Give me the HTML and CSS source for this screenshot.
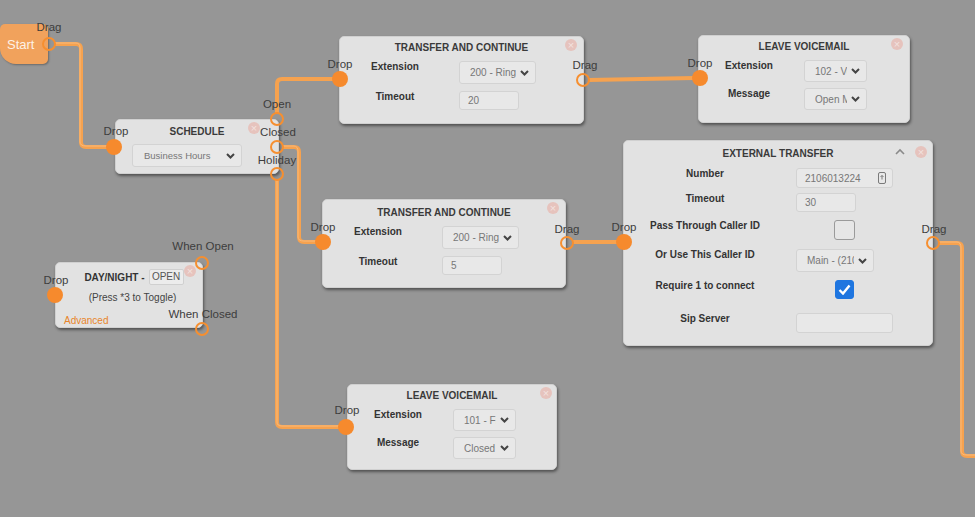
FILE: index.html
```html
<!DOCTYPE html>
<html lang="en">
<head>
    <meta charset="UTF-8">
    <meta name="viewport" content="width=device-width, initial-scale=1.0">
    <title>Call Flow</title>
    <link rel="stylesheet" href="styles.css">
</head>
<body>

<div class="canvas">

    <!-- Connections between nodes -->
    <svg class="wires" width="975" height="517">
        <g fill="none" stroke="#f6a24f" stroke-width="4">
            <path d="M55 44 H76 Q81 44 81 49 V142 Q81 147 86 147 H108"/>
            <path d="M277 113 V84 Q277 79 282 79 H334"/>
            <path d="M283 147 H294 Q299 147 299 152 V237 Q299 242 304 242 H317"/>
            <path d="M277 180 V422 Q277 427 282 427 H340"/>
            <path d="M589 80 L694 78"/>
            <path d="M573 242 H618"/>
            <path d="M939 243 H957 Q962 243 962 248 V451 Q962 456 967 456 H975"/>
        </g>
        <g fill="none" stroke="#f9c590" stroke-width="1" opacity="0.7">
            <path d="M55 43 H76 Q80 43 80 48 V142 Q80 146 86 146 H108"/>
            <path d="M283 146 H294 Q298 146 298 152 V237 Q298 241 304 241 H317"/>
            <path d="M277 180 V422 Q277 426 282 426 H340"/>
            <path d="M939 242 H957 Q961 242 961 248 V451 Q961 455 967 455 H975"/>
        </g>
    </svg>

    <!-- Start -->
    <div class="node-start">Start</div>

    <!-- Schedule -->
    <div class="node n-schedule">
        <span class="close"></span>
        <div class="node-title">SCHEDULE</div>
        <div class="select sel-schedule"><span class="value">Business Hours</span><svg class="chev" width="9" height="6"><path d="M1 1l3.5 3.5L8 1"/></svg></div>
    </div>

    <!-- Transfer and continue (open) -->
    <div class="node n-tc1">
        <span class="close"></span>
        <div class="node-title">TRANSFER AND CONTINUE</div>
        <div class="fields fields-tc">
            <label>Extension</label>
            <div class="select"><span class="value">200 - Ring Group</span><svg class="chev" width="9" height="6"><path d="M1 1l3.5 3.5L8 1"/></svg></div>
            <label>Timeout</label>
            <div class="input input-short">20</div>
        </div>
    </div>

    <!-- Leave voicemail (open) -->
    <div class="node n-lv1">
        <span class="close"></span>
        <div class="node-title">LEAVE VOICEMAIL</div>
        <div class="fields fields-lv">
            <label>Extension</label>
            <div class="select"><span class="value">102 - Voicemail</span><svg class="chev" width="9" height="6"><path d="M1 1l3.5 3.5L8 1"/></svg></div>
            <label>Message</label>
            <div class="select"><span class="value">Open Message</span><svg class="chev" width="9" height="6"><path d="M1 1l3.5 3.5L8 1"/></svg></div>
        </div>
    </div>

    <!-- Transfer and continue (closed) -->
    <div class="node n-tc2">
        <span class="close"></span>
        <div class="node-title">TRANSFER AND CONTINUE</div>
        <div class="fields fields-tc">
            <label>Extension</label>
            <div class="select"><span class="value">200 - Ring Group</span><svg class="chev" width="9" height="6"><path d="M1 1l3.5 3.5L8 1"/></svg></div>
            <label>Timeout</label>
            <div class="input input-short">5</div>
        </div>
    </div>

    <!-- External transfer -->
    <div class="node n-ext">
        <svg class="collapse" width="10" height="7"><path d="M1 6l4-4 4 4"/></svg>
        <span class="close"></span>
        <div class="node-title">EXTERNAL TRANSFER</div>
        <div class="fields fields-ext">
            <label>Number</label>
            <div class="input input-long">2106013224
                <svg class="spin" width="8" height="12"><rect x="0.5" y="0.5" width="7" height="11" rx="1.5"/><path d="M2.5 5l1.5-1.5L5.5 5M4 3.5v4"/></svg>
            </div>
            <label>Timeout</label>
            <div class="input input-short">30</div>
            <label>Pass Through Caller ID</label>
            <div class="check"></div>
            <label>Or Use This Caller ID</label>
            <div class="select sel-caller"><span class="value">Main - (210) 601-3224</span><svg class="chev" width="9" height="6"><path d="M1 1l3.5 3.5L8 1"/></svg></div>
            <label>Require 1 to connect</label>
            <div class="check checked"><svg width="13" height="11"><path d="M1.5 6l3.5 3.5L11.5 1.5"/></svg></div>
            <label>Sip Server</label>
            <div class="input input-long"></div>
        </div>
    </div>

    <!-- Day / night -->
    <div class="node n-daynight">
        <span class="close"></span>
        <div class="dn-title">DAY/NIGHT - <span class="dn-state">OPEN</span></div>
        <div class="dn-hint">(Press *3 to Toggle)</div>
        <div class="dn-advanced">Advanced</div>
    </div>

    <!-- Leave voicemail (holiday) -->
    <div class="node n-lv2">
        <span class="close"></span>
        <div class="node-title">LEAVE VOICEMAIL</div>
        <div class="fields fields-lv">
            <label>Extension</label>
            <div class="select"><span class="value">101 - Front Desk</span><svg class="chev" width="9" height="6"><path d="M1 1l3.5 3.5L8 1"/></svg></div>
            <label>Message</label>
            <div class="select"><span class="value">Closed Message</span><svg class="chev" width="9" height="6"><path d="M1 1l3.5 3.5L8 1"/></svg></div>
        </div>
    </div>

    <!-- Ports and their labels -->
    <svg class="ports" width="975" height="517">
        <g class="drop">
            <circle cx="114" cy="147" r="8"/>
            <circle cx="340" cy="79" r="8"/>
            <circle cx="700" cy="78" r="8"/>
            <circle cx="323" cy="242" r="8"/>
            <circle cx="624" cy="242" r="8"/>
            <circle cx="55" cy="295" r="8"/>
            <circle cx="346" cy="427" r="8"/>
        </g>
        <g class="drag">
            <circle cx="49" cy="44" r="6"/>
            <circle cx="277" cy="119" r="6"/>
            <circle cx="277" cy="147" r="6"/>
            <circle cx="277" cy="174" r="6"/>
            <circle cx="583" cy="80" r="6"/>
            <circle cx="567" cy="243" r="6"/>
            <circle cx="933" cy="243" r="6"/>
            <circle cx="202" cy="263" r="6"/>
            <circle cx="202" cy="329" r="6"/>
        </g>
        <g class="port-label">
            <text x="49" y="31">Drag</text>
            <text x="116" y="135">Drop</text>
            <text x="277" y="108">Open</text>
            <text x="278" y="136">Closed</text>
            <text x="277" y="164">Holiday</text>
            <text x="340" y="68">Drop</text>
            <text x="585" y="69">Drag</text>
            <text x="700" y="67">Drop</text>
            <text x="323" y="231">Drop</text>
            <text x="567" y="233">Drag</text>
            <text x="624" y="231">Drop</text>
            <text x="934" y="233">Drag</text>
            <text x="56" y="284">Drop</text>
            <text x="203" y="250">When Open</text>
            <text x="203" y="318">When Closed</text>
            <text x="347" y="414">Drop</text>
        </g>
    </svg>

</div>

</body>
</html>
```

FILE: styles.css
```css
body {
    margin: 0;
    background-color: #969696;
    font-family: "Liberation Sans", Arial, sans-serif;
    color: #333;
}

.canvas {
    position: relative;
    width: 975px;
    height: 517px;
    overflow: hidden;
}

.wires,
.ports {
    position: absolute;
    left: 0;
    top: 0;
    pointer-events: none;
}
.ports {
    z-index: 2;
}
.drop circle {
    fill: #f68a2d;
}
.drag circle {
    fill: none;
    stroke: #f68f30;
    stroke-width: 2;
}
.port-label text {
    font-family: "Liberation Sans", Arial, sans-serif;
    font-size: 11.5px;
    fill: #3d3d3d;
    text-anchor: middle;
}

/* nodes */
.node {
    position: absolute;
    box-sizing: border-box;
    background-color: #e2e2e2;
    border: 1px solid #d0d0d0;
    border-radius: 5px;
    box-shadow: 1px 2px 3px rgba(0, 0, 0, 0.45);
    z-index: 1;
}
.node-start {
    position: absolute;
    left: 0;
    top: 24px;
    width: 48px;
    height: 40px;
    box-sizing: border-box;
    padding: 14px 0 0 7px;
    background-color: #f1a25c;
    border-radius: 5px 5px 5px 16px;
    box-shadow: 1px 1px 2px rgba(0, 0, 0, 0.3);
    color: #fdf1e6;
    font-size: 13px;
    line-height: 14px;
    z-index: 1;
}

.n-schedule { left: 115px; top: 119px; width: 164px; height: 55px; }
.n-tc1      { left: 339px; top: 36px;  width: 245px; height: 88px; }
.n-lv1      { left: 698px; top: 35px;  width: 212px; height: 88px; }
.n-tc2      { left: 322px; top: 199px; width: 244px; height: 89px; }
.n-ext      { left: 623px; top: 140px; width: 310px; height: 206px; }
.n-daynight { left: 55px;  top: 262px; width: 148px; height: 66px; }
.n-lv2      { left: 347px; top: 384px; width: 210px; height: 86px; }

.close {
    position: absolute;
    top: 2px;
    right: 6px;
    width: 12px;
    height: 12px;
    border-radius: 50%;
    background-color: #e6c3bd;
}
.close::before {
    content: "\00d7";
    display: block;
    text-align: center;
    font-size: 11px;
    line-height: 12px;
    color: #f2e2df;
}
.n-schedule .close { right: 18px; top: 2px; }
.n-ext .close { top: 5px; right: 5px; }
.n-lv2 .close { right: 4px; }

.collapse {
    position: absolute;
    top: 7px;
    right: 27px;
}
.collapse path {
    fill: none;
    stroke: #8a8a8a;
    stroke-width: 1.6;
}

.node-title {
    padding-top: 5px;
    text-align: center;
    font-weight: bold;
    font-size: 10px;
    line-height: 12px;
    color: #3a3a3a;
}
.n-schedule .node-title { padding-top: 6px; }
.n-ext .node-title { padding-top: 7px; }
.n-tc2 .node-title { padding-top: 7px; }

/* label / control grids */
.fields {
    display: grid;
    align-items: start;
    margin-top: 7px;
}
.fields label {
    text-align: center;
    font-weight: bold;
    font-size: 10px;
    line-height: 12px;
    color: #333;
}
.fields-tc {
    grid-template-columns: 110px 77px;
    column-gap: 9px;
    row-gap: 7px;
}
.fields-lv {
    grid-template-columns: 100px 63px;
    column-gap: 5px;
    row-gap: 6px;
}
.fields-lv .select {
    height: 22px;
}
.fields-ext {
    grid-template-columns: 162px 97px;
    grid-template-rows: 25px 27px 29px 31px 33px 20px;
    column-gap: 10px;
    margin-top: 8px;
}

/* form controls */
.select,
.input {
    box-sizing: border-box;
    display: flex;
    align-items: center;
    background-color: #e8e8e8;
    border: 1px solid #d3d3d3;
    border-radius: 3px;
    color: #777;
    font-size: 10px;
}
.select {
    height: 23px;
    padding: 0 6px 0 10px;
    gap: 4px;
}
.select .value {
    flex: 1;
    overflow: hidden;
    white-space: nowrap;
}
.chev {
    flex: none;
}
.chev path {
    fill: none;
    stroke: #444;
    stroke-width: 2;
}
.sel-schedule {
    width: 110px;
    margin: 6px 0 0 16px;
    font-size: 9.5px;
    padding-left: 11px;
}
.sel-caller {
    width: 78px;
}
.input {
    height: 19px;
    padding: 0 6px 0 8px;
}
.input-short {
    width: 60px;
}
.input-long {
    width: 97px;
    height: 20px;
    justify-content: space-between;
}
.spin rect,
.spin path {
    fill: none;
    stroke: #7a7a7a;
    stroke-width: 1;
}

.check {
    justify-self: center;
    box-sizing: border-box;
    width: 21px;
    height: 20px;
    background-color: #e6e6e6;
    border: 1px solid #9a9a9a;
    border-radius: 3px;
}
.check.checked {
    width: 19px;
    height: 19px;
    display: flex;
    align-items: center;
    justify-content: center;
    background-color: #1f76e0;
    border-color: #1f76e0;
}
.check.checked path {
    fill: none;
    stroke: #fff;
    stroke-width: 2.4;
}

/* day / night toggle */
.dn-title {
    display: flex;
    align-items: center;
    justify-content: center;
    gap: 4px;
    margin-top: 6px;
    padding-left: 10px;
    height: 16px;
    font-weight: bold;
    font-size: 10px;
    color: #333;
}
.dn-state {
    box-sizing: border-box;
    width: 35px;
    height: 16px;
    line-height: 14px;
    text-align: center;
    font-weight: normal;
    color: #555;
    background-color: #ececec;
    border: 1px solid #d0d0d0;
    border-radius: 2px;
}
.dn-hint {
    margin-top: 7px;
    padding-left: 7px;
    text-align: center;
    font-size: 10px;
    line-height: 12px;
    color: #444;
}
.dn-advanced {
    margin-top: 11px;
    padding-left: 8px;
    font-size: 10px;
    line-height: 12px;
    color: #e8852b;
}
```
